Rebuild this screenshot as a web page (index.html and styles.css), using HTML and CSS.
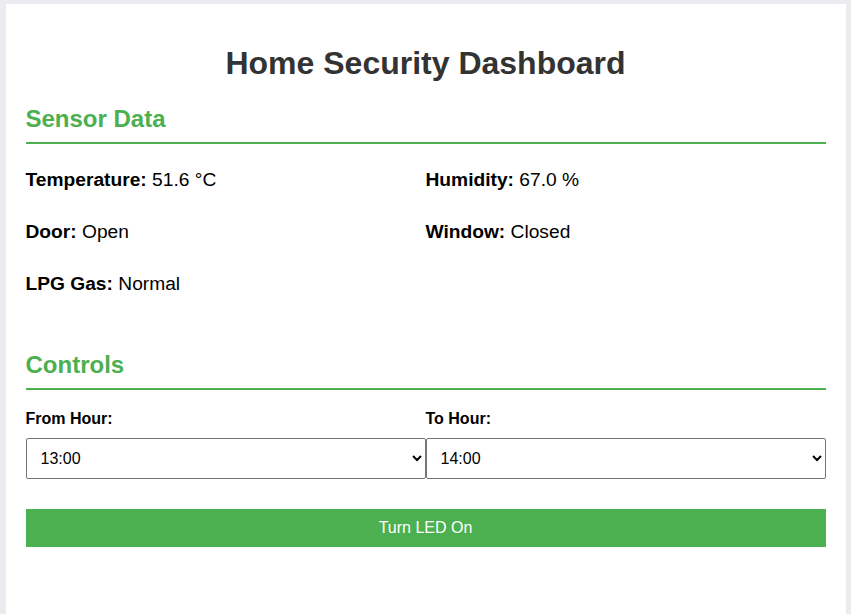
FILE: index.html
```html
<!DOCTYPE html>
<html lang="en">
<head>
<meta charset="utf-8">
<title>Home Security Dashboard</title>
<link rel="stylesheet" href="styles.css">
</head>
<body>
<div class="container">
  <h1 class="title">Home Security Dashboard</h1>

  <section class="section">
    <h2 class="section-title">Sensor Data</h2>
    <div class="sensor-grid">
      <div class="sensor"><strong>Temperature:</strong> 51.6 °C</div>
      <div class="sensor"><strong>Humidity:</strong> 67.0 %</div>
      <div class="sensor"><strong>Door:</strong> Open</div>
      <div class="sensor"><strong>Window:</strong> Closed</div>
      <div class="sensor"><strong>LPG Gas:</strong> Normal</div>
    </div>
  </section>

  <section class="section">
    <h2 class="section-title">Controls</h2>
    <div class="control-row">
      <div class="control">
        <label class="control-label" for="from">From Hour:</label>
        <select class="control-select" id="from">
          <option>13:00</option>
        </select>
      </div>
      <div class="control">
        <label class="control-label" for="to">To Hour:</label>
        <select class="control-select" id="to">
          <option>14:00</option>
        </select>
      </div>
    </div>
    <button class="led-button" type="button">Turn LED On</button>
  </section>
</div>
</body>
</html>
```

FILE: styles.css
```css
html, body {
  margin: 0;
  padding: 0;
}

body {
  background: #ebebf0;
  font-family: "Liberation Sans", Arial, sans-serif;
  color: #000;
  padding-top: 4px;
}

.container {
  box-sizing: border-box;
  max-width: 840px;
  margin: 0 auto;
  padding: 20px;
  background: #ffffff;
  min-height: calc(100vh - 4px);
}

.title {
  font-size: 32px;
  font-weight: bold;
  color: #333333;
  text-align: center;
  margin: 21px 0 23px;
}

.section-title {
  font-size: 24px;
  font-weight: bold;
  color: #4caf50;
  margin: 0 0 20px;
  padding-bottom: 9px;
  border-bottom: 2px solid #4caf50;
}

.sensor-grid {
  display: grid;
  grid-template-columns: 1fr 1fr;
  row-gap: 30px;
  padding-top: 5px;
  padding-bottom: 56px;
}

.sensor {
  font-size: 19.2px;
  line-height: 22px;
}

.control-row {
  display: flex;
}

.control {
  flex: 1;
  display: flex;
  flex-direction: column;
}

.control-label {
  font-size: 16px;
  font-weight: bold;
  margin-bottom: 10px;
}

.control-select {
  font-family: "Liberation Sans", Arial, sans-serif;
  font-size: 16px;
  padding: 10px;
  width: 100%;
  border: 1px solid #767676;
  border-radius: 2px;
  background: #fff;
  color: #000;
  box-sizing: border-box;
  height: 41px;
}

.led-button {
  display: block;
  width: 100%;
  margin-top: 30px;
  padding: 10px;
  border: none;
  background: #4caf50;
  color: #ffffff;
  font-family: "Liberation Sans", Arial, sans-serif;
  font-size: 16px;
  line-height: 18px;
}
```
